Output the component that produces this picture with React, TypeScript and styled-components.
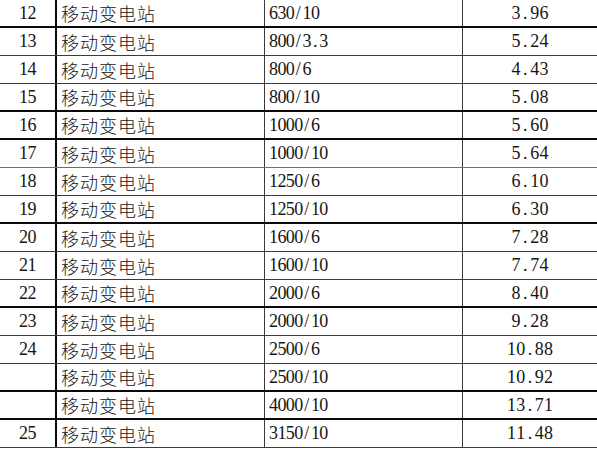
import React from "react";
import styled, { createGlobalStyle } from "styled-components";

type Weight = "thick" | "thin" | "light";

const rows: { no: string; name: string; spec: string; value: string; line: Weight }[] = [
  { no: "12", name: "移动变电站", spec: "630/10", value: "3.96", line: "thick" },
  { no: "13", name: "移动变电站", spec: "800/3.3", value: "5.24", line: "thin" },
  { no: "14", name: "移动变电站", spec: "800/6", value: "4.43", line: "thin" },
  { no: "15", name: "移动变电站", spec: "800/10", value: "5.08", line: "thick" },
  { no: "16", name: "移动变电站", spec: "1000/6", value: "5.60", line: "thick" },
  { no: "17", name: "移动变电站", spec: "1000/10", value: "5.64", line: "light" },
  { no: "18", name: "移动变电站", spec: "1250/6", value: "6.10", line: "thin" },
  { no: "19", name: "移动变电站", spec: "1250/10", value: "6.30", line: "thick" },
  { no: "20", name: "移动变电站", spec: "1600/6", value: "7.28", line: "thin" },
  { no: "21", name: "移动变电站", spec: "1600/10", value: "7.74", line: "thin" },
  { no: "22", name: "移动变电站", spec: "2000/6", value: "8.40", line: "thick" },
  { no: "23", name: "移动变电站", spec: "2000/10", value: "9.28", line: "thin" },
  { no: "24", name: "移动变电站", spec: "2500/6", value: "10.88", line: "thin" },
  { no: "", name: "移动变电站", spec: "2500/10", value: "10.92", line: "thick" },
  { no: "", name: "移动变电站", spec: "4000/10", value: "13.71", line: "thick" },
  { no: "25", name: "移动变电站", spec: "3150/10", value: "11.48", line: "thin" },
];

const lineStyle: { [key: string]: string } = {
  thick: "2px solid #0a0a0a",
  thin: "1px solid #3a3a3a",
  light: "1px solid #6e6e6e",
};

const GlobalStyle = createGlobalStyle`
  body {
    margin: 0;
    background: #ffffff;
  }
`;

const Sheet = styled.div`
  width: 597px;
  height: 451px;
  overflow: hidden;
  background: #ffffff;
  color: #161616;
`;

const Row = styled.div<{ $line: Weight }>`
  display: grid;
  grid-template-columns: 57px 208px 198px 1fr;
  height: 28px;
  box-sizing: border-box;
  border-bottom: ${({ $line }) => lineStyle[$line]};
`;

const Cell = styled.div<{ $align?: "left" | "center" }>`
  display: flex;
  align-items: center;
  justify-content: ${({ $align }) => ($align === "center" ? "center" : "flex-start")};
  padding-left: ${({ $align }) => ($align === "center" ? "0" : "4px")};
  box-sizing: border-box;
  overflow: hidden;
  white-space: nowrap;
`;

const NoCell = styled(Cell)`
  border-right: 2px solid #0a0a0a;
`;

const NameCell = styled(Cell)`
  border-right: 1px solid #3a3a3a;
  font-family: "Noto Sans CJK SC", "Noto Sans CJK TC", sans-serif;
  font-size: 18px;
  letter-spacing: 1px;
  font-weight: 300;
`;

const SpecCell = styled(Cell)`
  border-right: 1px solid #3a3a3a;
`;

const Digits = styled.span`
  display: inline-flex;
  font-family: "Liberation Serif", "DejaVu Serif", serif;
  font-size: 18px;
`;

const Glyph = styled.span<{ $w: number }>`
  display: inline-block;
  width: ${({ $w }) => $w}px;
  text-align: center;
`;

function Mono({ text, w }: { text: string; w: number }) {
  return (
    <Digits>
      {text.split("").map((ch, i) => (
        <Glyph key={i} $w={w}>
          {ch}
        </Glyph>
      ))}
    </Digits>
  );
}

export default function App() {
  return (
    <>
      <GlobalStyle />
      <Sheet>
        {rows.map((r, i) => (
          <Row key={i} $line={r.line}>
            <NoCell $align="center">
              <Mono text={r.no} w={8.6} />
            </NoCell>
            <NameCell>{r.name}</NameCell>
            <SpecCell>
              <Mono text={r.spec} w={8.4} />
            </SpecCell>
            <Cell $align="center">
              <Mono text={r.value} w={9.3} />
            </Cell>
          </Row>
        ))}
      </Sheet>
    </>
  );
}
